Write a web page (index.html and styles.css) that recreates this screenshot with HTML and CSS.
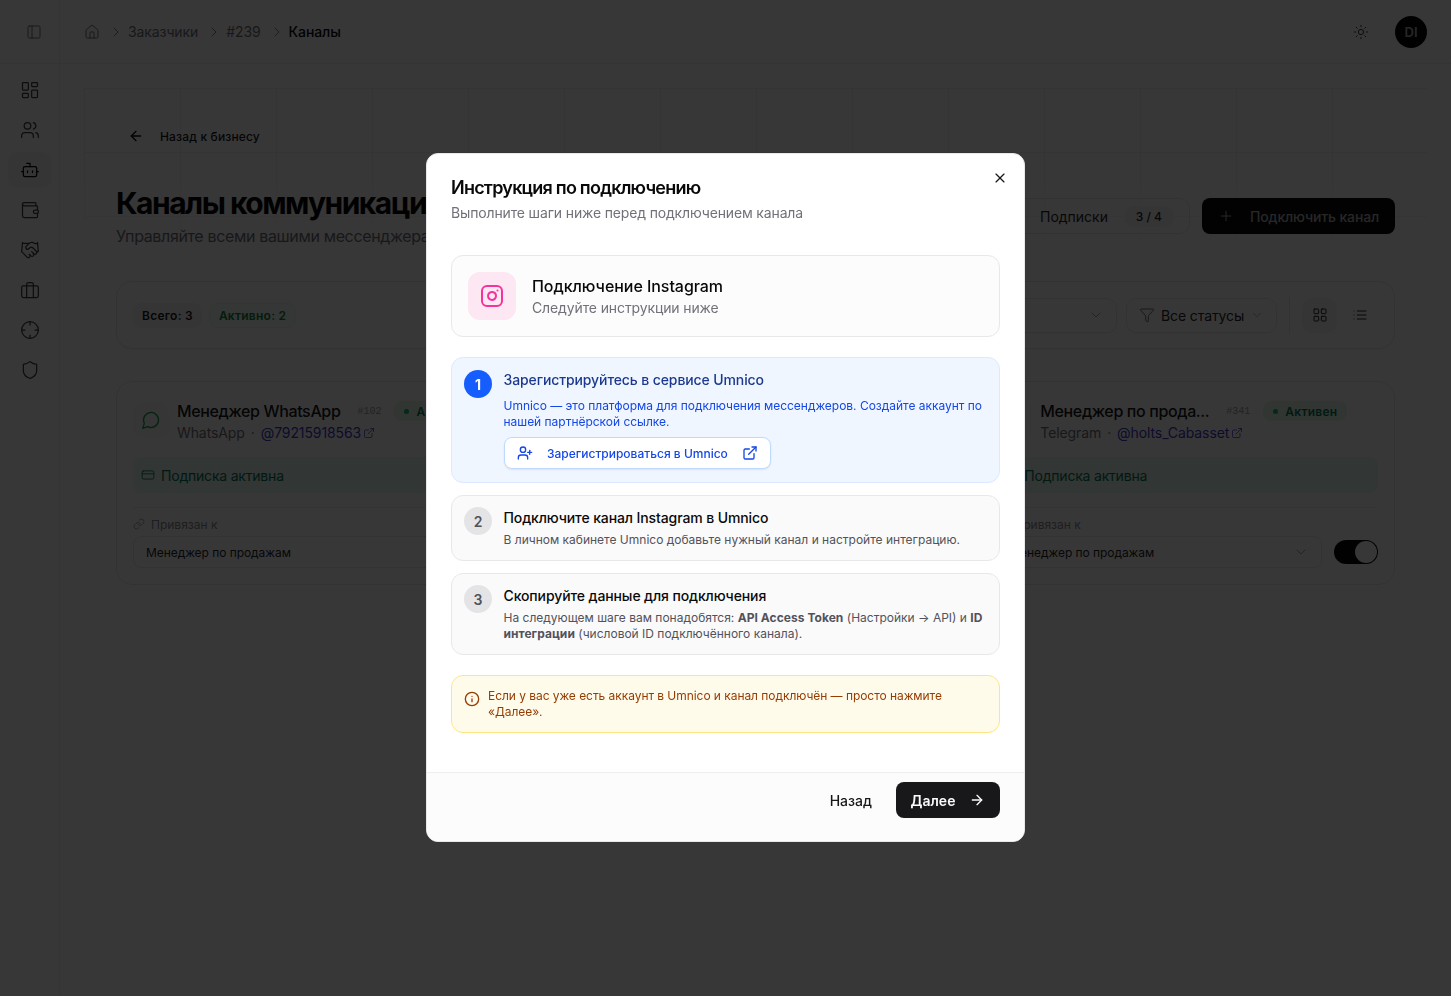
FILE: index.html
```html
<!DOCTYPE html>
<html lang="ru">
<head>
<meta charset="utf-8">
<title>Каналы</title>
<link rel="stylesheet" href="styles.css">
</head>
<body>
<svg class="sprite" aria-hidden="true">
  <symbol id="i-panel" viewBox="0 0 24 24"><rect x="3" y="3" width="18" height="18" rx="2"/><path d="M9 3v18"/></symbol>
  <symbol id="i-home" viewBox="0 0 24 24"><path d="M15 21v-8a1 1 0 0 0-1-1h-4a1 1 0 0 0-1 1v8"/><path d="M3 10a2 2 0 0 1 .709-1.528l7-5.999a2 2 0 0 1 2.582 0l7 5.999A2 2 0 0 1 21 10v9a2 2 0 0 1-2 2H5a2 2 0 0 1-2-2z"/></symbol>
  <symbol id="i-chev-r" viewBox="0 0 24 24"><path d="m9 18 6-6-6-6"/></symbol>
  <symbol id="i-chev-d" viewBox="0 0 24 24"><path d="m6 9 6 6 6-6"/></symbol>
  <symbol id="i-dash" viewBox="0 0 24 24"><rect x="3" y="3" width="7" height="9" rx="1"/><rect x="14" y="3" width="7" height="5" rx="1"/><rect x="14" y="12" width="7" height="9" rx="1"/><rect x="3" y="16" width="7" height="5" rx="1"/></symbol>
  <symbol id="i-users" viewBox="0 0 24 24"><path d="M16 21v-2a4 4 0 0 0-4-4H6a4 4 0 0 0-4 4v2"/><circle cx="9" cy="7" r="4"/><path d="M22 21v-2a4 4 0 0 0-3-3.87"/><path d="M16 3.13a4 4 0 0 1 0 7.75"/></symbol>
  <symbol id="i-bot" viewBox="0 0 24 24"><path d="M12 8V4H8"/><rect x="4" y="8" width="16" height="12" rx="2"/><path d="M2 14h2"/><path d="M20 14h2"/><path d="M15 13v2"/><path d="M9 13v2"/></symbol>
  <symbol id="i-wallet" viewBox="0 0 24 24"><path d="M19 7V4a1 1 0 0 0-1-1H5a2 2 0 0 0 0 4h15a1 1 0 0 1 1 1v4h-3a2 2 0 0 0 0 4h3a1 1 0 0 0 1-1v-2a1 1 0 0 0-1-1"/><path d="M3 5v14a2 2 0 0 0 2 2h15a1 1 0 0 0 1-1v-4"/></symbol>
  <symbol id="i-hand" viewBox="0 0 24 24"><path d="m11 17 2 2a1 1 0 1 0 3-3"/><path d="m14 14 2.5 2.5a1 1 0 1 0 3-3l-3.88-3.88a3 3 0 0 0-4.24 0l-.88.88a1 1 0 1 1-3-3l2.81-2.81a5.79 5.79 0 0 1 7.06-.87l.47.28a2 2 0 0 0 1.42.25L21 4"/><path d="m21 3 1 11h-2"/><path d="M3 3 2 14l6.5 6.5a1 1 0 1 0 3-3"/><path d="M3 4h8"/></symbol>
  <symbol id="i-case" viewBox="0 0 24 24"><rect x="2" y="7" width="20" height="14" rx="2"/><path d="M16 21V5a2 2 0 0 0-2-2h-4a2 2 0 0 0-2 2v16"/></symbol>
  <symbol id="i-cross" viewBox="0 0 24 24"><circle cx="12" cy="12" r="10"/><path d="M22 12h-4"/><path d="M6 12H2"/><path d="M12 6V2"/><path d="M12 22v-4"/></symbol>
  <symbol id="i-shield" viewBox="0 0 24 24"><path d="M20 13c0 5-3.5 7.5-7.66 8.95a1 1 0 0 1-.67-.01C7.5 20.5 4 18 4 13V6a1 1 0 0 1 1-1c2 0 4.5-1.2 6.24-2.72a1.17 1.17 0 0 1 1.52 0C14.51 3.81 17 5 19 5a1 1 0 0 1 1 1z"/></symbol>
  <symbol id="i-sun" viewBox="0 0 24 24"><circle cx="12" cy="12" r="4"/><path d="M12 2v2"/><path d="M12 20v2"/><path d="m4.93 4.93 1.41 1.41"/><path d="m17.66 17.66 1.41 1.41"/><path d="M2 12h2"/><path d="M20 12h2"/><path d="m6.34 17.66-1.41 1.41"/><path d="m19.07 4.93-1.41 1.41"/></symbol>
  <symbol id="i-left" viewBox="0 0 24 24"><path d="m12 19-7-7 7-7"/><path d="M19 12H5"/></symbol>
  <symbol id="i-right" viewBox="0 0 24 24"><path d="M5 12h14"/><path d="m12 5 7 7-7 7"/></symbol>
  <symbol id="i-plus" viewBox="0 0 24 24"><path d="M5 12h14"/><path d="M12 5v14"/></symbol>
  <symbol id="i-filter" viewBox="0 0 24 24"><path d="M10 20a1 1 0 0 0 .553.895l2 1A1 1 0 0 0 14 21v-7a2 2 0 0 1 .517-1.341L21.74 4.67A1 1 0 0 0 21 3H3a1 1 0 0 0-.742 1.67l7.225 7.989A2 2 0 0 1 10 14z"/></symbol>
  <symbol id="i-grid" viewBox="0 0 24 24"><rect x="3" y="3" width="7" height="7" rx="1"/><rect x="14" y="3" width="7" height="7" rx="1"/><rect x="14" y="14" width="7" height="7" rx="1"/><rect x="3" y="14" width="7" height="7" rx="1"/></symbol>
  <symbol id="i-list" viewBox="0 0 24 24"><path d="M3 12h.01"/><path d="M3 18h.01"/><path d="M3 6h.01"/><path d="M8 12h13"/><path d="M8 18h13"/><path d="M8 6h13"/></symbol>
  <symbol id="i-msg" viewBox="0 0 24 24"><path d="M7.9 20A9 9 0 1 0 4 16.1L2 22Z"/></symbol>
  <symbol id="i-ext" viewBox="0 0 24 24"><path d="M15 3h6v6"/><path d="M10 14 21 3"/><path d="M18 13v6a2 2 0 0 1-2 2H5a2 2 0 0 1-2-2V8a2 2 0 0 1 2-2h6"/></symbol>
  <symbol id="i-card" viewBox="0 0 24 24"><rect x="2" y="5" width="20" height="14" rx="2"/><path d="M2 10h20"/></symbol>
  <symbol id="i-link" viewBox="0 0 24 24"><path d="M10 13a5 5 0 0 0 7.54.54l3-3a5 5 0 0 0-7.07-7.07l-1.72 1.71"/><path d="M14 11a5 5 0 0 0-7.54-.54l-3 3a5 5 0 0 0 7.07 7.07l1.71-1.71"/></symbol>
  <symbol id="i-insta" viewBox="0 0 24 24"><rect x="2" y="2" width="20" height="20" rx="5"/><path d="M16 11.37A4 4 0 1 1 12.63 8 4 4 0 0 1 16 11.37z"/><path d="M17.5 6.5h.01"/></symbol>
  <symbol id="i-uplus" viewBox="0 0 24 24"><path d="M16 21v-2a4 4 0 0 0-4-4H6a4 4 0 0 0-4 4v2"/><circle cx="9" cy="7" r="4"/><path d="M19 8v6"/><path d="M22 11h-6"/></symbol>
  <symbol id="i-info" viewBox="0 0 24 24"><circle cx="12" cy="12" r="10"/><path d="M12 16v-4"/><path d="M12 8h.01"/></symbol>
  <symbol id="i-x" viewBox="0 0 24 24"><path d="M18 6 6 18"/><path d="m6 6 12 12"/></symbol>
</svg>

<div class="app">
  <aside class="sidebar">
    <div class="side-head"><svg class="ic ic16 muted"><use href="#i-panel"/></svg></div>
    <nav class="side-nav">
      <a class="nav-item"><svg class="ic ic20"><use href="#i-dash"/></svg></a>
      <a class="nav-item"><svg class="ic ic20"><use href="#i-users"/></svg></a>
      <a class="nav-item active"><svg class="ic ic20"><use href="#i-bot"/></svg></a>
      <a class="nav-item"><svg class="ic ic20"><use href="#i-wallet"/></svg></a>
      <a class="nav-item"><svg class="ic ic20"><use href="#i-hand"/></svg></a>
      <a class="nav-item"><svg class="ic ic20"><use href="#i-case"/></svg></a>
      <a class="nav-item"><svg class="ic ic20"><use href="#i-cross"/></svg></a>
      <a class="nav-item"><svg class="ic ic20"><use href="#i-shield"/></svg></a>
    </nav>
  </aside>

  <div class="main">
    <header class="topbar">
      <div class="crumbs">
        <svg class="ic ic16 muted"><use href="#i-home"/></svg>
        <svg class="ic ic16 muted thin"><use href="#i-chev-r"/></svg>
        <span class="crumb">Заказчики</span>
        <svg class="ic ic16 muted thin"><use href="#i-chev-r"/></svg>
        <span class="crumb">#239</span>
        <svg class="ic ic16 muted thin"><use href="#i-chev-r"/></svg>
        <span class="crumb current">Каналы</span>
      </div>
      <div class="top-actions">
        <svg class="ic ic16"><use href="#i-sun"/></svg>
        <div class="avatar">DI</div>
      </div>
    </header>

    <main class="content">
      <a class="back"><svg class="ic ic16"><use href="#i-left"/></svg><span>Назад к бизнесу</span></a>

      <div class="page-head">
        <div>
          <h1 class="page-title">Каналы коммуникации</h1>
          <p class="page-sub">Управляйте всеми вашими мессенджерами и интеграциями</p>
        </div>
        <div class="head-actions">
          <div class="subs"><span>Подписки</span><span class="subs-count">3 / 4</span></div>
          <button class="btn-primary"><svg class="ic ic16"><use href="#i-plus"/></svg>Подключить канал</button>
        </div>
      </div>

      <section class="filters">
        <div class="stat-pills">
          <span class="pill">Всего: 3</span>
          <span class="pill pill-green">Активно: 2</span>
        </div>
        <div class="filter-controls">
          <div class="select sel-sub"><span>Все подписки</span><svg class="ic ic16 faint"><use href="#i-chev-d"/></svg></div>
          <div class="select sel-status"><svg class="ic ic16 muted"><use href="#i-filter"/></svg><span>Все статусы</span><svg class="ic ic14 faint"><use href="#i-chev-d"/></svg></div>
          <span class="v-div"></span>
          <span class="view active"><svg class="ic ic16"><use href="#i-grid"/></svg></span>
          <span class="view"><svg class="ic ic16"><use href="#i-list"/></svg></span>
        </div>
      </section>

      <section class="cards">
        <article class="card">
          <div class="card-top">
            <span class="card-icon"><svg class="ic ic20 green"><use href="#i-msg"/></svg></span>
            <div class="card-info">
              <div class="card-name"><span class="name">Менеджер WhatsApp</span><span class="num">#102</span><span class="status"><i></i>Активен</span></div>
              <div class="card-sub">WhatsApp<span class="dot">·</span><span class="handle">@79215918563</span><svg class="ic ic12 handle-ic"><use href="#i-ext"/></svg></div>
            </div>
          </div>
          <div class="sub-band"><svg class="ic ic14"><use href="#i-card"/></svg>Подписка активна</div>
          <div class="bind-label"><svg class="ic ic12"><use href="#i-link"/></svg>Привязан к</div>
          <div class="bind-row">
            <div class="bind-select"><span>Менеджер по продажам</span><svg class="ic ic16 faint"><use href="#i-chev-d"/></svg></div>
            <span class="toggle"></span>
          </div>
        </article>
        <article class="card"></article>
        <article class="card">
          <div class="card-top">
            <span class="card-icon"></span>
            <div class="card-info">
              <div class="card-name"><span class="name">Менеджер по прода...</span><span class="num">#341</span><span class="status"><i></i>Активен</span></div>
              <div class="card-sub">Telegram<span class="dot">·</span><span class="handle">@holts_Cabasset</span><svg class="ic ic12 handle-ic"><use href="#i-ext"/></svg></div>
            </div>
          </div>
          <div class="sub-band"><svg class="ic ic14"><use href="#i-card"/></svg>Подписка активна</div>
          <div class="bind-label"><svg class="ic ic12"><use href="#i-link"/></svg>Привязан к</div>
          <div class="bind-row">
            <div class="bind-select"><span>Менеджер по продажам</span><svg class="ic ic16 faint"><use href="#i-chev-d"/></svg></div>
            <span class="toggle"></span>
          </div>
        </article>
      </section>
    </main>
  </div>
</div>

<div class="overlay">
  <div class="modal">
    <button class="close"><svg class="ic ic16"><use href="#i-x"/></svg></button>
    <div class="modal-head">
      <h2 class="modal-title">Инструкция по подключению</h2>
      <p class="modal-desc">Выполните шаги ниже перед подключением канала</p>
    </div>
    <div class="modal-body">
      <div class="hero">
        <span class="hero-icon"><svg class="ic ic24"><use href="#i-insta"/></svg></span>
        <div>
          <div class="hero-title">Подключение Instagram</div>
          <div class="hero-sub">Следуйте инструкции ниже</div>
        </div>
      </div>

      <div class="steps">
        <div class="step step-on">
          <span class="step-num">1</span>
          <div class="step-main">
            <div class="step-title">Зарегистрируйтесь в сервисе Umnico</div>
            <p class="step-text">Umnico — это платформа для подключения мессенджеров. Создайте аккаунт по нашей партнёрской ссылке.</p>
            <a class="step-btn">
              <svg class="ic ic16"><use href="#i-uplus"/></svg>
              <span>Зарегистрироваться в Umnico</span>
              <svg class="ic ic16"><use href="#i-ext"/></svg>
            </a>
          </div>
        </div>
        <div class="step">
          <span class="step-num">2</span>
          <div class="step-main">
            <div class="step-title">Подключите канал Instagram в Umnico</div>
            <p class="step-text">В личном кабинете Umnico добавьте нужный канал и настройте интеграцию.</p>
          </div>
        </div>
        <div class="step">
          <span class="step-num">3</span>
          <div class="step-main">
            <div class="step-title">Скопируйте данные для подключения</div>
            <p class="step-text">На следующем шаге вам понадобятся: <b>API Access Token</b> (Настройки → API) и <b>ID интеграции</b> (числовой ID подключённого канала).</p>
          </div>
        </div>
      </div>

      <div class="note">
        <svg class="ic ic16"><use href="#i-info"/></svg>
        <p>Если у вас уже есть аккаунт в Umnico и канал подключён — просто нажмите «Далее».</p>
      </div>
    </div>
    <div class="modal-foot">
      <button class="btn-ghost">Назад</button>
      <button class="btn-next">Далее<svg class="ic ic16"><use href="#i-right"/></svg></button>
    </div>
  </div>
</div>
</body>
</html>
```

FILE: styles.css
```css
* { box-sizing: border-box; }
html, body { margin: 0; height: 100%; }
body {
  font-family: Inter, "Noto Sans", "Liberation Sans", sans-serif;
  color: #09090b;
  background: #fff;
  overflow: hidden;
  -webkit-font-smoothing: antialiased;
}
.sprite { display: none; }
.ic { fill: none; stroke: currentColor; stroke-width: 1.5; stroke-linecap: round; stroke-linejoin: round; flex: none; display: block; }
.thin { stroke-width: 1.25; }
.ic12 { width: 12px; height: 12px; }
.ic14 { width: 14px; height: 14px; }
.ic16 { width: 16px; height: 16px; }
.ic20 { width: 20px; height: 20px; }
.ic24 { width: 24px; height: 24px; }
.muted { color: #71717a; }
.faint { color: #a1a1aa; }
.green { color: #16a34a; }
h1, h2, p { margin: 0; }
button { font: inherit; border: 0; background: none; color: inherit; padding: 0; }

/* app shell */
.app { display: flex; height: 996px; }
.sidebar { width: 60px; flex: none; border-right: 1px solid #eeeeef; }
.side-head { height: 64px; display: flex; align-items: center; justify-content: center; padding-left: 8px; border-bottom: 1px solid #eeeeef; }
.side-nav { display: flex; flex-direction: column; align-items: center; gap: 4px; padding-top: 8px; }
.nav-item { width: 44px; height: 36px; display: flex; align-items: center; justify-content: center; border-radius: 10px; color: #3f3f46; }
.nav-item.active { background: #f4f4f5; color: #09090b; }

.main { flex: 1; min-width: 0; }
.topbar { height: 64px; display: flex; align-items: center; justify-content: space-between; padding: 0 24px; border-bottom: 1px solid #eeeeef; }
.crumbs { display: flex; align-items: center; gap: 8px; font-size: 14px; letter-spacing: -0.1px; }
.crumb { color: #71717a; margin-left: -4px; }
.crumb.current { color: #09090b; font-weight: 500; }
.top-actions { display: flex; align-items: center; gap: 26px; color: #3f3f46; }
.avatar { width: 32px; height: 32px; border-radius: 50%; background: #09090b; color: #b0b0b4; font-size: 13px; font-weight: 600; letter-spacing: 0; display: flex; align-items: center; justify-content: center; }

/* content */
.content { position: relative; padding: 56px 56px 0; }
.content::before {
  content: ""; position: absolute; left: 24px; right: 24px; top: 24px; height: 210px;
  background-image: linear-gradient(#f1f1f2 1px, transparent 1px), linear-gradient(90deg, #f1f1f2 1px, transparent 1px);
  background-size: 96px 64px;
  -webkit-mask-image: linear-gradient(#000 40%, transparent);
  mask-image: linear-gradient(#000 40%, transparent);
}
.content > * { position: relative; }
.back { display: inline-flex; align-items: center; gap: 16px; height: 32px; padding: 0 12px; font-size: 12px; font-weight: 500; letter-spacing: 0.15px; color: #18181b; }
.back .ic { color: #09090b; stroke-width: 2; }
.page-head { display: flex; justify-content: space-between; align-items: flex-start; margin-top: 33px; }
.page-title { font-size: 30px; line-height: 36px; font-weight: 700; letter-spacing: -1.5px; color: #09090b; }
.page-sub { font-size: 16px; line-height: 24px; letter-spacing: -0.35px; color: #71717a; margin-top: 3px; }
.head-actions { display: flex; align-items: center; gap: 12px; margin-top: 13px; }
.subs { display: flex; align-items: center; justify-content: space-between; gap: 16px; width: 176px; height: 36px; padding: 0 16px 0 25px; border: 1px solid #e9e9eb; border-radius: 10px; font-size: 14px; color: #27272a; white-space: nowrap; }
.subs-count { background: #f4f4f5; border-radius: 8px; padding: 3px 11px; font-size: 12px; font-weight: 500; }
.btn-primary { display: flex; align-items: center; gap: 16px; height: 36px; padding: 0 16px; width: 193px; background: #0a0a0b; color: #b5b5b8; border-radius: 8px; font-size: 14px; font-weight: 500; letter-spacing: -0.15px; white-space: nowrap; }

.filters { display: flex; justify-content: space-between; align-items: center; height: 68px; margin-top: 33px; padding: 0 16px; border: 1px solid #e9e9eb; border-radius: 16px; background: #fff; box-shadow: 0 1px 2px rgba(0, 0, 0, .04); }
.stat-pills { display: flex; gap: 7px; }
.pill { display: inline-flex; align-items: center; height: 25px; padding: 0 9px; border-radius: 8px; background: #f6f6f7; font-size: 12px; font-weight: 600; letter-spacing: 0.25px; color: #18181b; }
.pill-green { background: #f0fdf4; border: 1px solid #dcfce7; color: #15803d; }
.filter-controls { display: flex; align-items: center; }
.select { display: flex; align-items: center; height: 35px; padding: 0 12px; border: 1px solid #e9e9eb; border-radius: 10px; font-size: 14px; color: #27272a; white-space: nowrap; box-shadow: 0 1px 2px rgba(0, 0, 0, .04); }
.sel-sub { width: 200px; justify-content: space-between; }
.sel-status { width: 151px; gap: 6px; margin-left: 9px; letter-spacing: -0.1px; }
.v-div { width: 1px; height: 36px; background: #e6e6e8; margin: 0 12px; }
.view { width: 35px; height: 35px; display: flex; align-items: center; justify-content: center; border-radius: 10px; color: #27272a; }
.view.active { background: #f6f6f7; }
.view + .view { margin-left: 6px; padding-right: 1px; }

.cards { display: grid; grid-template-columns: repeat(3, 1fr); gap: 16px; margin-top: 32px; }
.card { height: 204px; padding: 17px 16px 16px; border: 1px solid #e9e9eb; border-radius: 16px; background: #fff; }
.card-top { display: flex; gap: 8px; height: 42px; }
.card-icon { width: 36px; height: 36px; margin-top: 3px; border-radius: 10px; background: #f5f8f6; display: flex; align-items: center; justify-content: center; flex: none; }
.card-info { min-width: 0; }
.card-name { display: flex; align-items: center; height: 24px; white-space: nowrap; }
.name { font-size: 16px; font-weight: 500; letter-spacing: -0.36px; color: #18181b; }
.num { font-family: "Liberation Mono", monospace; font-size: 10px; color: #a1a1aa; margin-left: 17px; width: 37px; }
.status { display: inline-flex; align-items: center; gap: 7px; height: 20px; padding: 0 10px; border-radius: 8px; background: #e3f9ec; font-size: 12px; font-weight: 600; letter-spacing: 0.25px; color: #047857; }
.status i { width: 5px; height: 5px; border-radius: 50%; background: #10b981; }
.card-sub { display: flex; align-items: center; font-size: 14px; line-height: 20px; letter-spacing: -0.1px; color: #71717a; }
.dot { margin: 0 6px; }
.handle { color: #4338ca; }
.handle-ic { color: #4338ca; margin-left: 2px; }
.sub-band { display: flex; align-items: center; gap: 6px; height: 36px; margin-top: 16px; padding: 0 8px; border-radius: 8px; background: #e9f9f0; font-size: 14px; letter-spacing: -0.2px; color: #047857; }
.bind-label { display: flex; align-items: center; gap: 6px; height: 27px; margin-top: 14px; padding-top: 6px; border-top: 1px solid #eeeeef; font-size: 12px; color: #8a8a92; }
.bind-row { display: flex; align-items: center; gap: 12px; margin-top: 2px; }
.bind-select { flex: 1; display: flex; align-items: center; justify-content: space-between; height: 32px; padding: 0 12px; border: 1px solid #e9e9eb; border-radius: 8px; font-size: 12px; letter-spacing: -0.05px; color: #27272a; box-shadow: 0 1px 2px rgba(0, 0, 0, .04); }
.toggle { position: relative; width: 44px; height: 24px; border-radius: 12px; background: #09090b; flex: none; }
.toggle::after { content: ""; position: absolute; right: 1px; top: 1px; width: 22px; height: 22px; border-radius: 50%; background: #fff; }

/* modal */
.overlay { position: fixed; inset: 0; padding-bottom: 1px; background: rgba(0, 0, 0, .785); display: flex; align-items: center; justify-content: center; }
.modal { position: relative; width: 599px; height: 689px; background: #fff; border: 1px solid #e8e8ea; border-radius: 12px; display: flex; flex-direction: column; overflow: hidden; }
.modal .ic { stroke-width: 2; }
.close { position: absolute; right: 16px; top: 16px; color: #18181b; }
.modal .close .ic { stroke-width: 1.75; }
.modal-head { padding: 24px 24px 0; }
.modal-title { font-size: 18px; line-height: 20px; font-weight: 600; letter-spacing: -0.77px; color: #09090b; }
.modal-desc { font-size: 14px; line-height: 20px; letter-spacing: -0.15px; color: #71717a; margin-top: 5px; }
.modal-body { flex: 1; padding: 32px 24px 0; }
.hero { display: flex; align-items: center; gap: 16px; height: 82px; padding: 0 16px; background: #fcfcfc; border: 1px solid #e8e8ea; border-radius: 12px; }
.hero-icon { width: 48px; height: 48px; border-radius: 12px; background: #fce7f3; color: #f6339a; display: flex; align-items: center; justify-content: center; }
.hero-title { font-size: 16px; line-height: 24px; font-weight: 500; letter-spacing: -0.05px; color: #09090b; }
.hero-sub { font-size: 14px; line-height: 20px; letter-spacing: -0.12px; color: #71717a; }
.steps { display: flex; flex-direction: column; gap: 12px; margin-top: 20px; }
.step { display: flex; gap: 12px; padding: 12px 12px 12px; background: #fafafa; border: 1px solid #e8e8ea; border-radius: 12px; }
.step-num { width: 28px; height: 28px; margin-top: -1px; flex: none; border-radius: 50%; background: #e4e4e7; color: #52525b; font-size: 14px; font-weight: 600; display: flex; align-items: center; justify-content: center; }
.step-main { min-width: 0; flex: 1; margin-left: -0.5px; }
.step-title { font-size: 14px; line-height: 20px; font-weight: 500; letter-spacing: -0.11px; color: #09090b; }
.step-text { font-size: 12px; line-height: 16px; color: #52525b; margin-top: 4px; }
.step-text b { font-weight: 700; letter-spacing: 0.05px; }
.step-on { padding-bottom: 13px; background: #eff6ff; border-color: #dbeafe; }
.step-on .step-num { margin-top: 0; background: #155dfc; color: #fff; font-weight: 700; }
.step-on .step-title { color: #1c398e; }
.step-on .step-text { color: #1447e6; margin-top: 8px; letter-spacing: -0.02px; }
.step-btn { display: inline-flex; align-items: center; gap: 14.5px; height: 32px; margin-top: 7px; padding: 0 12px; background: #fff; border: 1px solid #bedbff; border-radius: 8px; font-size: 12px; font-weight: 500; color: #1447e6; box-shadow: 0 1px 2px rgba(0, 0, 0, .08); }
.note { display: flex; align-items: flex-start; gap: 8px; height: 58px; margin-top: 20px; padding: 12px; background: #fffbeb; border: 1px solid #fee685; border-radius: 12px; color: #973c00; }
.note .ic { margin-top: 3px; }
.note p { font-size: 12px; line-height: 16px; letter-spacing: -0.05px; }
.modal-foot { display: flex; align-items: flex-start; justify-content: flex-end; gap: 24px; height: 69px; padding: 9px 24px 0; background: #fcfcfc; border-top: 1px solid #efeff0; }
.btn-ghost { height: 36px; font-size: 14px; font-weight: 500; color: #18181b; }
.btn-next { display: flex; align-items: center; justify-content: center; gap: 14px; width: 104px; height: 36px; background: #18181b; border-radius: 8px; color: #fafafa; font-size: 14px; font-weight: 600; }
```
